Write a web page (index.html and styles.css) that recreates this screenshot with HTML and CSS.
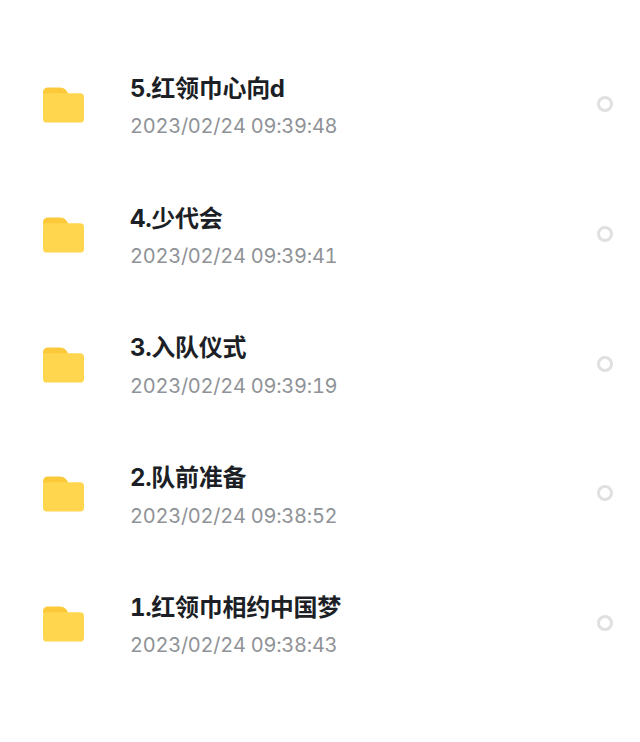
FILE: index.html
```html
<!DOCTYPE html>
<html lang="zh-CN">
<head>
    <meta charset="UTF-8">
    <meta name="viewport" content="width=device-width, initial-scale=1.0">
    <title>文件夹</title>
    <link rel="stylesheet" href="styles.css">
</head>
<body>
    <div class="file-list">
        <div class="file-row">
            <svg class="folder-icon" viewBox="0 0 42 36"><path class="folder-back" d="M0 5a5 5 0 0 1 5-5h12c3.500 0 6 1.500 7.500 4l1.500 3H0z"/><path class="folder-front" d="M0 8.500a2.500 2.500 0 0 1 2.500-2.500h35.500a4 4 0 0 1 4 4v22a4 4 0 0 1-4 4H4a4 4 0 0 1-4-4z"/></svg>
            <div class="file-info">
                <div class="file-name">5.红领巾心向d</div>
                <div class="file-date">2023/02/24 09:39:48</div>
            </div>
            <span class="radio"></span>
        </div>
        <div class="file-row">
            <svg class="folder-icon" viewBox="0 0 42 36"><path class="folder-back" d="M0 5a5 5 0 0 1 5-5h12c3.500 0 6 1.500 7.500 4l1.500 3H0z"/><path class="folder-front" d="M0 8.500a2.500 2.500 0 0 1 2.500-2.500h35.500a4 4 0 0 1 4 4v22a4 4 0 0 1-4 4H4a4 4 0 0 1-4-4z"/></svg>
            <div class="file-info">
                <div class="file-name">4.少代会</div>
                <div class="file-date">2023/02/24 09:39:41</div>
            </div>
            <span class="radio"></span>
        </div>
        <div class="file-row">
            <svg class="folder-icon" viewBox="0 0 42 36"><path class="folder-back" d="M0 5a5 5 0 0 1 5-5h12c3.500 0 6 1.500 7.500 4l1.500 3H0z"/><path class="folder-front" d="M0 8.500a2.500 2.500 0 0 1 2.500-2.500h35.500a4 4 0 0 1 4 4v22a4 4 0 0 1-4 4H4a4 4 0 0 1-4-4z"/></svg>
            <div class="file-info">
                <div class="file-name">3.入队仪式</div>
                <div class="file-date">2023/02/24 09:39:19</div>
            </div>
            <span class="radio"></span>
        </div>
        <div class="file-row">
            <svg class="folder-icon" viewBox="0 0 42 36"><path class="folder-back" d="M0 5a5 5 0 0 1 5-5h12c3.500 0 6 1.500 7.500 4l1.500 3H0z"/><path class="folder-front" d="M0 8.500a2.500 2.500 0 0 1 2.500-2.500h35.500a4 4 0 0 1 4 4v22a4 4 0 0 1-4 4H4a4 4 0 0 1-4-4z"/></svg>
            <div class="file-info">
                <div class="file-name">2.队前准备</div>
                <div class="file-date">2023/02/24 09:38:52</div>
            </div>
            <span class="radio"></span>
        </div>
        <div class="file-row">
            <svg class="folder-icon" viewBox="0 0 42 36"><path class="folder-back" d="M0 5a5 5 0 0 1 5-5h12c3.500 0 6 1.500 7.500 4l1.500 3H0z"/><path class="folder-front" d="M0 8.500a2.500 2.500 0 0 1 2.500-2.500h35.500a4 4 0 0 1 4 4v22a4 4 0 0 1-4 4H4a4 4 0 0 1-4-4z"/></svg>
            <div class="file-info">
                <div class="file-name">1.红领巾相约中国梦</div>
                <div class="file-date">2023/02/24 09:38:43</div>
            </div>
            <span class="radio"></span>
        </div>
    </div>
</body>
</html>
```

FILE: styles.css
```css
body {
    margin: 0;
    padding: 0;
    background-color: #fff;
    font-family: 'Inter', 'Noto Sans CJK SC', sans-serif;
    font-variant-numeric: tabular-nums;
}

.file-list {
    padding-top: 39.1px;
}

.file-row {
    display: flex;
    align-items: center;
    height: 129.8px;
    padding: 0 27px 0 43px;
}

.folder-icon {
    width: 41px;
    height: 36px;
    flex-shrink: 0;
    margin-top: 2px;
}

.folder-back {
    fill: #fcc93a;
}

.folder-front {
    fill: #ffd64d;
}

.file-info {
    flex: 1;
    margin-left: 46px;
    padding-top: 5px;
}

.file-name {
    font-size: 24px;
    line-height: 30px;
    font-weight: 700;
    letter-spacing: -0.3px;
    color: #1c1f26;
}

.file-date {
    margin-top: 9.500px;
    font-size: 20px;
    line-height: 26px;
    letter-spacing: -0.25px;
    color: #8f9296;
}

.radio {
    width: 10px;
    height: 10px;
    border: 3px solid #e0e0e0;
    border-radius: 50%;
}
```
